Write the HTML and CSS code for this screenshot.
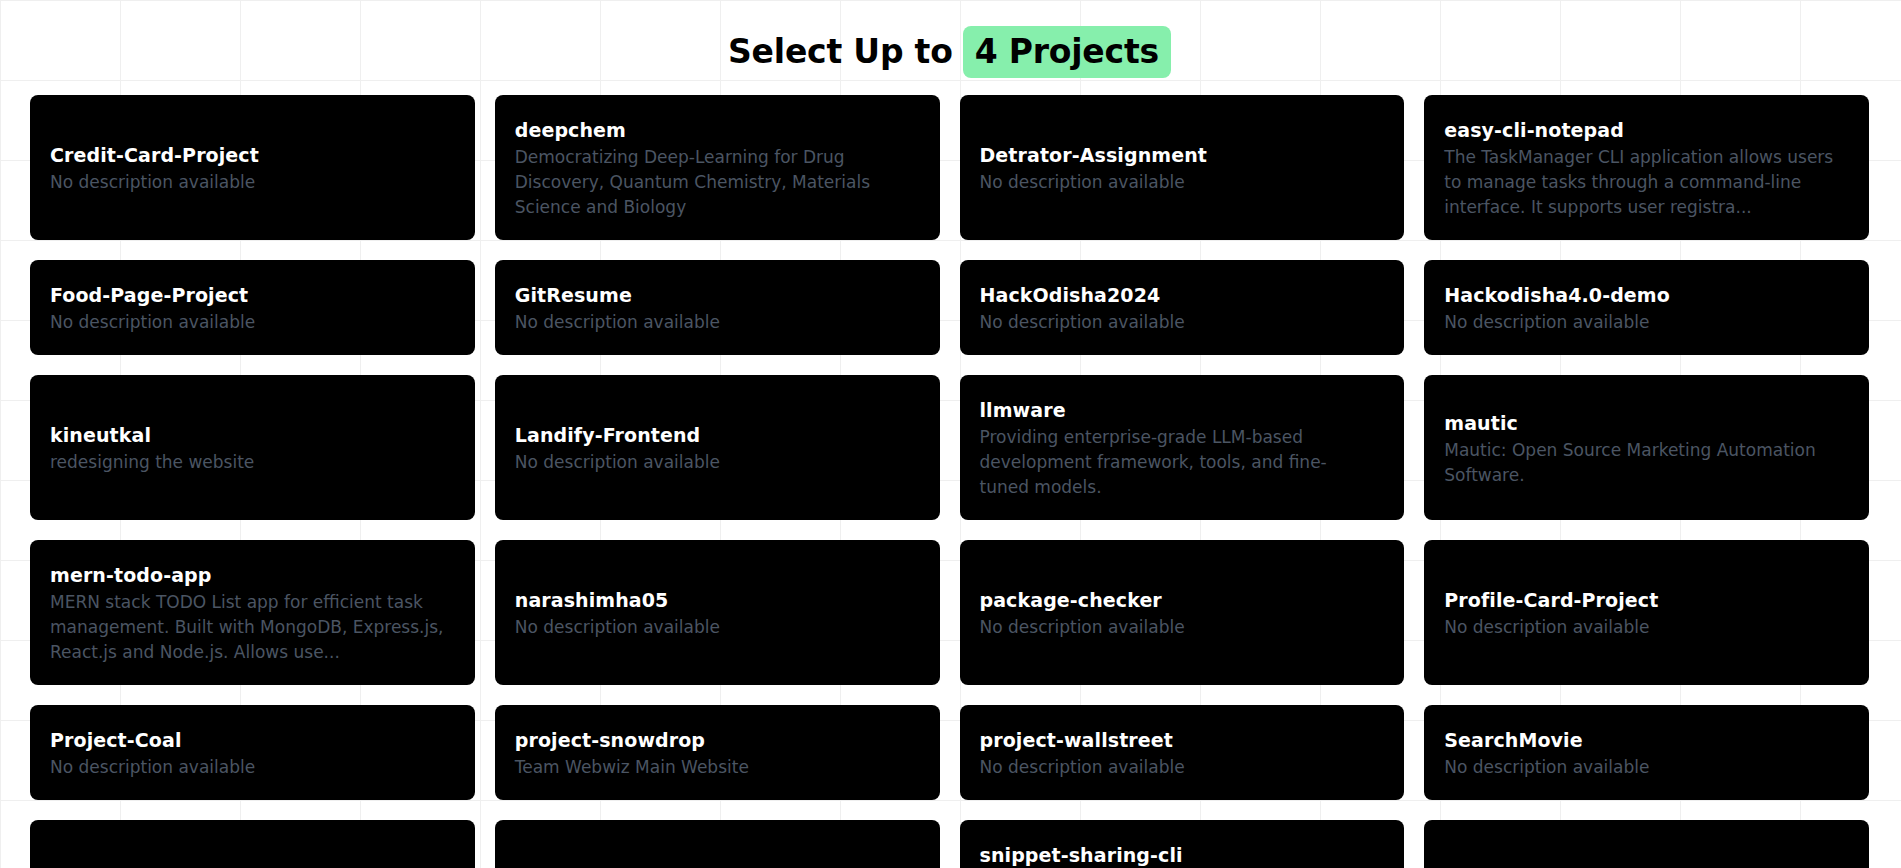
FILE: index.html
```html
<!DOCTYPE html>
<html lang="en">
<head>
<meta charset="utf-8">
<title>Select Projects</title>
<link rel="stylesheet" href="styles.css">
</head>
<body>
<main class="page">
  <h1 class="heading"><span class="heading-text">Select Up to</span><span class="badge">4 Projects</span></h1>
  <section class="grid">
    <div class="card"><div class="card-title">Credit-Card-Project</div><div class="card-desc">No description available</div></div>
    <div class="card"><div class="card-title">deepchem</div><div class="card-desc">Democratizing Deep-Learning for Drug Discovery, Quantum Chemistry, Materials Science and Biology</div></div>
    <div class="card"><div class="card-title">Detrator-Assignment</div><div class="card-desc">No description available</div></div>
    <div class="card"><div class="card-title">easy-cli-notepad</div><div class="card-desc">The TaskManager CLI application allows users to manage tasks through a command-line interface. It supports user registra...</div></div>

    <div class="card"><div class="card-title">Food-Page-Project</div><div class="card-desc">No description available</div></div>
    <div class="card"><div class="card-title">GitResume</div><div class="card-desc">No description available</div></div>
    <div class="card"><div class="card-title">HackOdisha2024</div><div class="card-desc">No description available</div></div>
    <div class="card"><div class="card-title">Hackodisha4.0-demo</div><div class="card-desc">No description available</div></div>

    <div class="card"><div class="card-title">kineutkal</div><div class="card-desc">redesigning the website</div></div>
    <div class="card"><div class="card-title">Landify-Frontend</div><div class="card-desc">No description available</div></div>
    <div class="card"><div class="card-title">llmware</div><div class="card-desc">Providing enterprise-grade LLM-based development framework, tools, and fine-<br>tuned models.</div></div>
    <div class="card"><div class="card-title">mautic</div><div class="card-desc">Mautic: Open Source Marketing Automation Software.</div></div>

    <div class="card"><div class="card-title">mern-todo-app</div><div class="card-desc">MERN stack TODO List app for efficient task management. Built with MongoDB, Express.js, React.js and Node.js. Allows use...</div></div>
    <div class="card"><div class="card-title">narashimha05</div><div class="card-desc">No description available</div></div>
    <div class="card"><div class="card-title">package-checker</div><div class="card-desc">No description available</div></div>
    <div class="card"><div class="card-title">Profile-Card-Project</div><div class="card-desc">No description available</div></div>

    <div class="card"><div class="card-title">Project-Coal</div><div class="card-desc">No description available</div></div>
    <div class="card"><div class="card-title">project-snowdrop</div><div class="card-desc">Team Webwiz Main Website</div></div>
    <div class="card"><div class="card-title">project-wallstreet</div><div class="card-desc">No description available</div></div>
    <div class="card"><div class="card-title">SearchMovie</div><div class="card-desc">No description available</div></div>

    <div class="card"><div class="card-title">Shopping-Cart</div><div class="card-desc">No description available</div></div>
    <div class="card"><div class="card-title">SIH-Project</div><div class="card-desc">No description available</div></div>
    <div class="card"><div class="card-title">snippet-sharing-cli</div><div class="card-desc">A command-line tool to save, search and share code snippets with your team straight from the terminal. Supports tags...</div></div>
    <div class="card"><div class="card-title">Spotify-Clone</div><div class="card-desc">No description available</div></div>
  </section>
</main>
</body>
</html>
```
FILE: styles.css
```css
html, body {
  margin: 0;
  padding: 0;
}

body {
  font-family: "DejaVu Sans", "Noto Sans", sans-serif;
  background-color: #ffffff;
  background-image:
    linear-gradient(to right, #efefef 1px, transparent 1px),
    linear-gradient(to bottom, #efefef 1px, transparent 1px);
  background-size: 120px 80px;
  color: #000;
}

.page {
  padding: 26px 32px 40px 30px;
}

.heading {
  margin: 0 0 17px 0;
  display: flex;
  justify-content: center;
  align-items: center;
  gap: 10px;
  font-size: 33px;
  font-weight: 700;
  line-height: 40px;
  letter-spacing: -0.2px;
  color: #000;
}

.heading-text {
  padding: 6px 0;
}

.badge {
  background: #86efac;
  border-radius: 8px;
  padding: 6px 12px;
}

.grid {
  display: grid;
  grid-template-columns: repeat(4, 1fr);
  gap: 20px;
}

.card {
  background: #000;
  border-radius: 8px;
  padding: 20px;
  display: flex;
  flex-direction: column;
  justify-content: center;
}

.card-title {
  color: #fff;
  font-size: 19px;
  font-weight: 700;
  line-height: 30px;
  letter-spacing: 0.1px;
}

.card-desc {
  color: #4b5563;
  font-size: 17px;
  line-height: 25px;
}
```
